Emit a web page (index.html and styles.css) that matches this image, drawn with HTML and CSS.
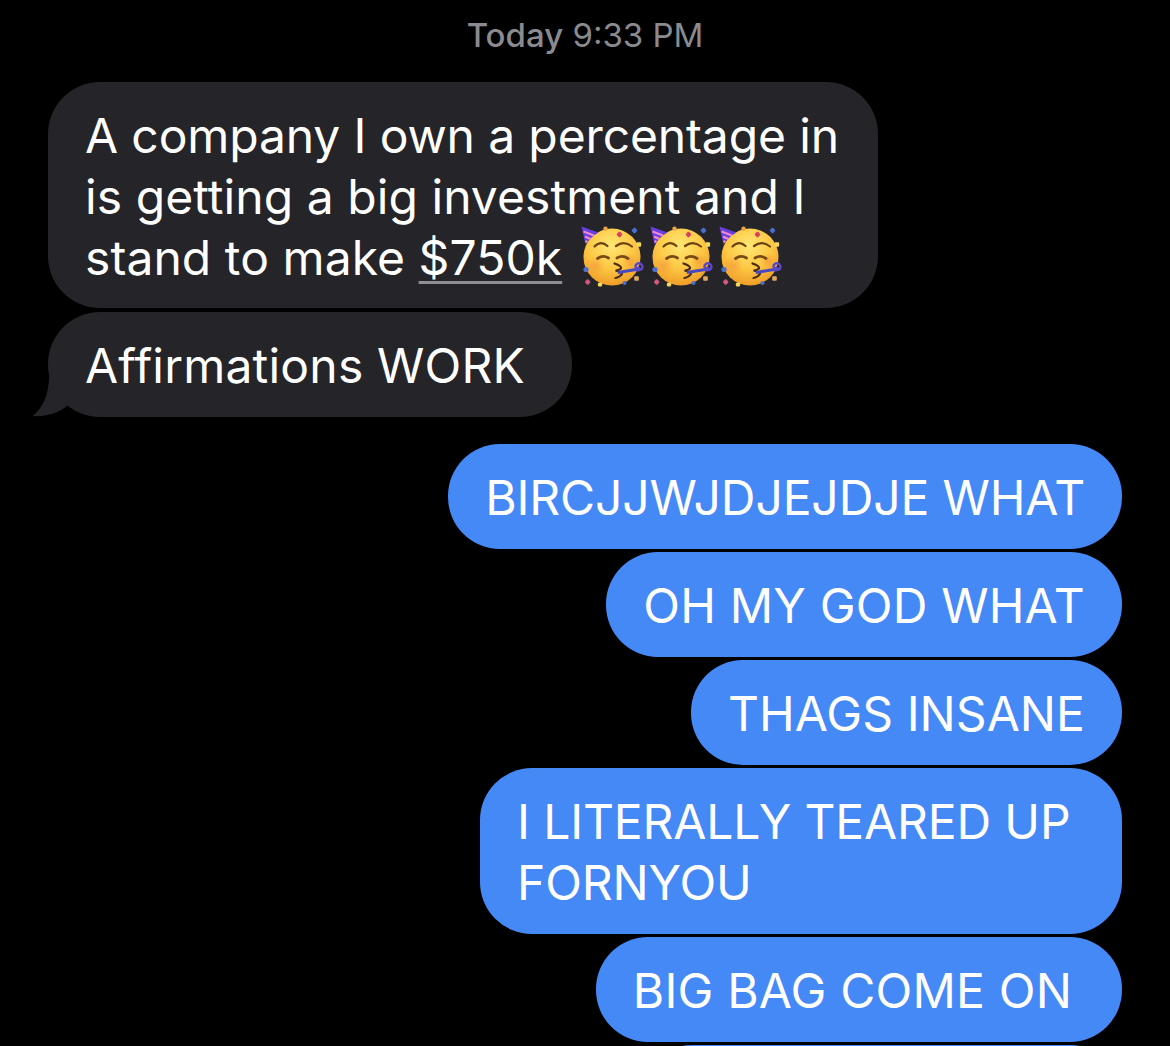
FILE: index.html
```html
<!DOCTYPE html>
<html lang="en">
<head>
    <meta charset="UTF-8">
    <meta name="viewport" content="width=device-width, initial-scale=1.0">
    <title>Messages</title>
    <link rel="stylesheet" href="styles.css">
</head>
<body>
    <svg class="defs" width="0" height="0" aria-hidden="true">
        <defs>
            <radialGradient id="face" cx="48%" cy="30%" r="72%">
                <stop offset="0" stop-color="#ffe774"/>
                <stop offset="0.55" stop-color="#fdc844"/>
                <stop offset="1" stop-color="#ee9a26"/>
            </radialGradient>
            <radialGradient id="blush">
                <stop offset="0" stop-color="#f39a3c" stop-opacity="0.7"/>
                <stop offset="1" stop-color="#f39a3c" stop-opacity="0"/>
            </radialGradient>
            <symbol id="party" viewBox="0 0 66 66">
                <circle cx="34" cy="34" r="28.5" fill="url(#face)"/>
                <circle cx="17" cy="43" r="10" fill="url(#blush)"/>
                <circle cx="52" cy="38" r="8" fill="url(#blush)"/>
                <!-- hat -->
                <path d="M3.5 3.5L20.5 9.5Q12 14 7.5 21.5Z" fill="#6a3fe0"/>
                <path d="M5.5 8.5L16 12.5M7 13.5L12.5 16M7.5 18L9.5 19" stroke="#f08ad0" stroke-width="2.2" fill="none"/>
                <!-- confetti -->
                <circle cx="27.5" cy="5.8" r="2.2" fill="#eda544"/>
                <rect x="39.2" y="9.2" width="4.6" height="4.6" rx="1.2" fill="#d8405f" transform="rotate(45 41.5 11.5)"/>
                <rect x="54.2" y="5.2" width="4.6" height="4.6" rx="1.2" fill="#4a6fd0" transform="rotate(45 56.5 7.5)"/>
                <rect x="58.5" y="19.2" width="4.6" height="4.6" rx="1" fill="#f7d75a"/>
                <circle cx="8" cy="46.5" r="2.6" fill="#4a6fd0"/>
                <rect x="7.4" y="56.7" width="4.6" height="4.6" rx="1.2" fill="#cf5a80" transform="rotate(45 9.7 59)"/>
                <rect x="19.8" y="59.5" width="4.4" height="4" rx="1.5" fill="#f7d75a"/>
                <circle cx="46.5" cy="60" r="2" fill="#4a6fd0"/>
                <rect x="56.2" y="53.2" width="4.6" height="4.6" rx="1" fill="#e0a95c"/>
                <!-- brows and eyes -->
                <path d="M16.5 23.5Q23 17 29.5 23M38 23Q46 17 54 23.5" stroke="#6b4210" stroke-width="2.2" fill="none" stroke-linecap="round"/>
                <path d="M19.5 35.5Q25 31.5 30.5 35M39 35Q44.5 31.5 50 35.5" stroke="#7a4a14" stroke-width="2.8" fill="none" stroke-linecap="round"/>
                <!-- mouth and party horn -->
                <path d="M36.5 40.5Q44 43 43 45.5Q41 47.5 37.5 47.5Q44 49 44 51Q42 54 37.5 55" stroke="#4b2c0d" stroke-width="2.2" fill="none" stroke-linecap="round"/>
                <path d="M40 49.5L58 46.5" stroke="#4a48c0" stroke-width="3.2" fill="none"/>
                <path d="M58 47.5Q64.5 47.5 64.5 43.5Q63.5 39.5 59.5 40.5Q56.5 42 58 45Q60 46 61.5 44" stroke="#5a48c8" stroke-width="2.4" fill="none"/>
            </symbol>
        </defs>
    </svg>

    <div class="thread">
        <div class="timestamp"><strong>Today</strong> 9:33 PM</div>

        <div class="group">
            <div class="bubble them first">
                A company I own a percentage in<br>
                <span class="line">is getting a big investment and I</span><br>
                <span class="line">stand to make <span class="link">$750k</span></span>
                <span class="emojis">
                    <svg class="emoji"><use href="#party"/></svg>
                    <svg class="emoji"><use href="#party"/></svg>
                    <svg class="emoji"><use href="#party"/></svg>
                </span>
            </div>
            <div class="bubble them loose affirm">
                Affirmations WORK
                <svg class="tail" viewBox="0 0 40 40" width="40" height="40"><path d="M17 0C17 18 10 32 0.5 39C14 40 26 36 35 29L40 0Z" fill="#252529"/></svg>
            </div>
        </div>

        <div class="group mine">
            <div class="bubble me">BIRCJJWJDJEJDJE WHAT</div>
            <div class="bubble me loose">OH MY GOD WHAT</div>
            <div class="bubble me line">THAGS INSANE</div>
            <div class="bubble me tear-up">I LITERALLY TEARED UP<br>FORNYOU</div>
            <div class="bubble me loose big-bag">BIG BAG COME ON</div>
            <div class="bubble me cut-off">&nbsp;</div>
        </div>
    </div>
</body>
</html>
```

FILE: styles.css
```css
* {
    margin: 0;
    padding: 0;
    box-sizing: border-box;
}

html, body {
    height: 1046px;
    overflow: hidden;
}

body {
    background-color: #000;
    color: #fff;
    font-family: Inter, 'Liberation Sans', sans-serif;
}

.defs {
    display: block;
}

.thread {
    display: flex;
    flex-direction: column;
    height: 1046px;
    padding: 0 48px;
    overflow: hidden;
}

.timestamp {
    flex-shrink: 0;
    height: 82px;
    padding-top: 15px;
    color: #8a8a8f;
    font-size: 33px;
    line-height: 40px;
    text-align: center;
}

.timestamp strong {
    font-weight: 500;
}

.group {
    display: flex;
    flex-direction: column;
    align-items: flex-start;
    flex-shrink: 0;
    gap: 4px;
}

.group.mine {
    align-items: flex-end;
    gap: 3.2px;
    margin-top: 27px;
}

.bubble {
    position: relative;
    padding: 24px 37px 20px;
    border-radius: 52px;
    font-size: 48px;
    line-height: 60.8px;
    letter-spacing: -0.13px;
    white-space: nowrap;
}

.loose {
    letter-spacing: 0.2px;
}

.line {
    letter-spacing: 0.06px;
}

.them {
    background-color: #252529;
}

.me {
    background-color: #4589f7;
}

.first {
    min-width: 830px;
}

.affirm {
    padding-right: 47px;
}

.tear-up {
    min-width: 642px;
}

.big-bag {
    padding-right: 50px;
}

.cut-off {
    width: 482px;
}

.link {
    text-decoration: underline;
    text-decoration-color: #8d8d93;
    text-decoration-thickness: 3px;
    text-underline-offset: 6px;
}

.emojis {
    display: inline-flex;
    align-items: center;
    gap: 3px;
    height: 40px;
    margin-left: 2px;
    vertical-align: -14.5px;
}

.emoji {
    flex-shrink: 0;
    width: 66px;
    height: 66px;
}

.tail {
    position: absolute;
    left: -16px;
    bottom: 0;
}
```
